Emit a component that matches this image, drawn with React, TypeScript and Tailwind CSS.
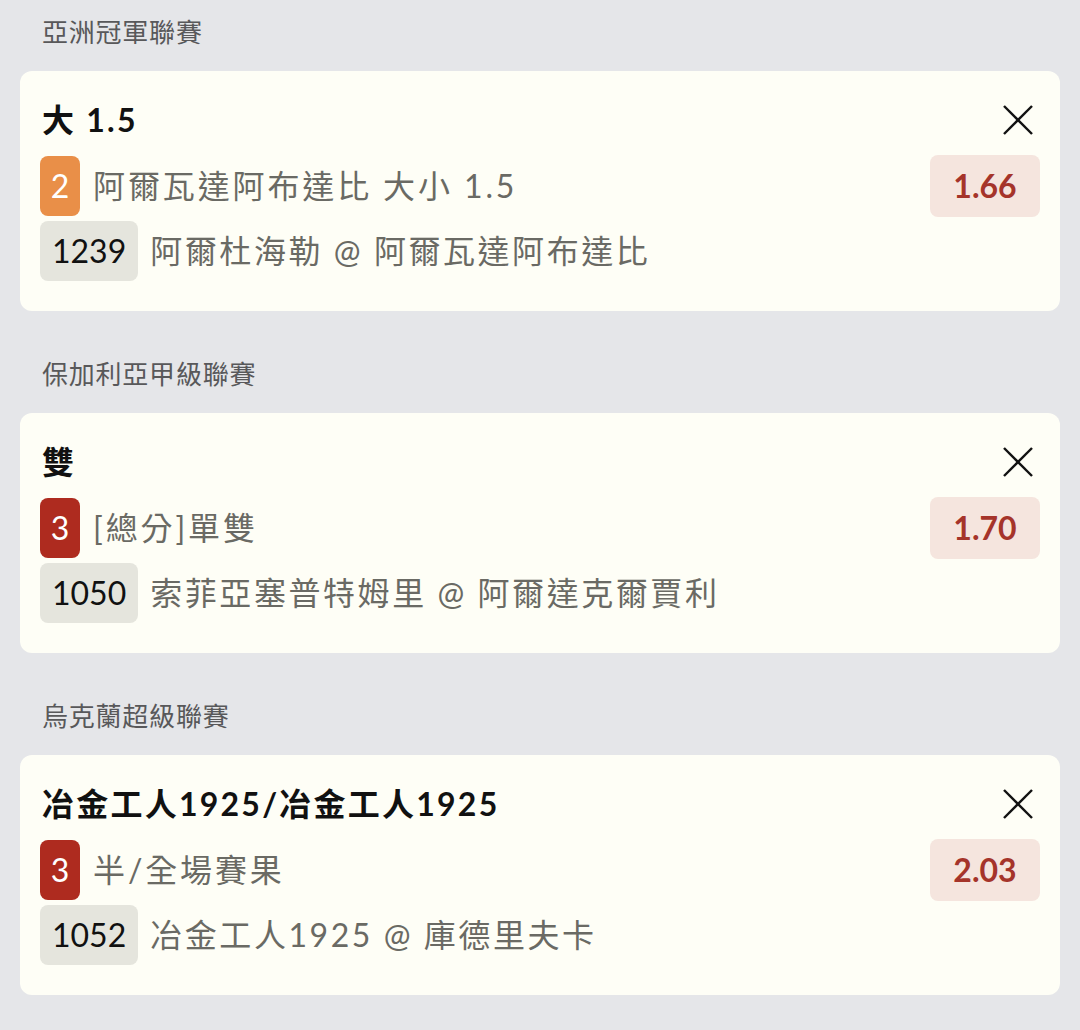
const bets = [
  {
    league: "亞洲冠軍聯賽",
    title: "大 1.5",
    num: "2",
    numColor: "bg-[#e98f48]",
    market: "阿爾瓦達阿布達比 大小 1.5",
    odds: "1.66",
    id: "1239",
    match: "阿爾杜海勒 @ 阿爾瓦達阿布達比",
  },
  {
    league: "保加利亞甲級聯賽",
    title: "雙",
    num: "3",
    numColor: "bg-[#ae2b1f]",
    market: "[總分]單雙",
    odds: "1.70",
    id: "1050",
    match: "索菲亞塞普特姆里 @ 阿爾達克爾賈利",
  },
  {
    league: "烏克蘭超級聯賽",
    title: "冶金工人1925/冶金工人1925",
    num: "3",
    numColor: "bg-[#ae2b1f]",
    market: "半/全場賽果",
    odds: "2.03",
    id: "1052",
    match: "冶金工人1925 @ 庫德里夫卡",
  },
];

function CloseIcon() {
  return (
    <svg width="32" height="32" viewBox="0 0 32 32" fill="none">
      <line x1="2" y1="2" x2="30" y2="30" stroke="#111" strokeWidth="2.4" />
      <line x1="30" y1="2" x2="2" y2="30" stroke="#111" strokeWidth="2.4" />
    </svg>
  );
}

function BetCard({ bet }: { bet: (typeof bets)[number] }) {
  return (
    <div>
      <div className="h-[71px] pl-[22px] pt-[13px] text-[26px] leading-[38px] tracking-[0.03em] text-[#58585a]">
        {bet.league}
      </div>
      <div className="rounded-[12px] bg-[#fefef6] px-5 pb-[30px] pt-6">
        <div className="flex h-[50px] items-center justify-between">
          <div className="pl-[2px] text-[32px] font-bold tracking-[0.07em] text-[#111]">{bet.title}</div>
          <div className="mr-[6px]">
            <CloseIcon />
          </div>
        </div>
        <div className="mt-[10px] flex h-[62px] items-center justify-between">
          <div className="flex items-center gap-[13px]">
            <span
              className={`flex h-[60px] w-[40px] items-center justify-center rounded-[8px] text-[32px] text-white ${bet.numColor}`}
            >
              {bet.num}
            </span>
            <span className="text-[32px] tracking-[0.09em] text-[#6a6a64]">{bet.market}</span>
          </div>
          <div className="flex h-[62px] w-[110px] items-center justify-center rounded-[8px] bg-[#f5e5de] text-[32px] font-bold text-[#a5342a]">
            {bet.odds}
          </div>
        </div>
        <div className="mt-[4px] flex h-[60px] items-center gap-[12px]">
          <span className="flex h-[60px] items-center rounded-[8px] bg-[#e5e5dd] px-[12px] text-[32px] text-[#111]">
            {bet.id}
          </span>
          <span className="text-[32px] tracking-[0.08em] text-[#6a6a64]">{bet.match}</span>
        </div>
      </div>
    </div>
  );
}

export default function App() {
  return (
    <div
      className="flex min-h-[1030px] w-[1080px] flex-col gap-[31px] bg-[#e5e6e9] px-5"
      style={{ fontFamily: 'Lato, "Noto Sans CJK TC", sans-serif' }}
    >
      {bets.map((b, i) => (
        <BetCard key={i} bet={b} />
      ))}
    </div>
  );
}
